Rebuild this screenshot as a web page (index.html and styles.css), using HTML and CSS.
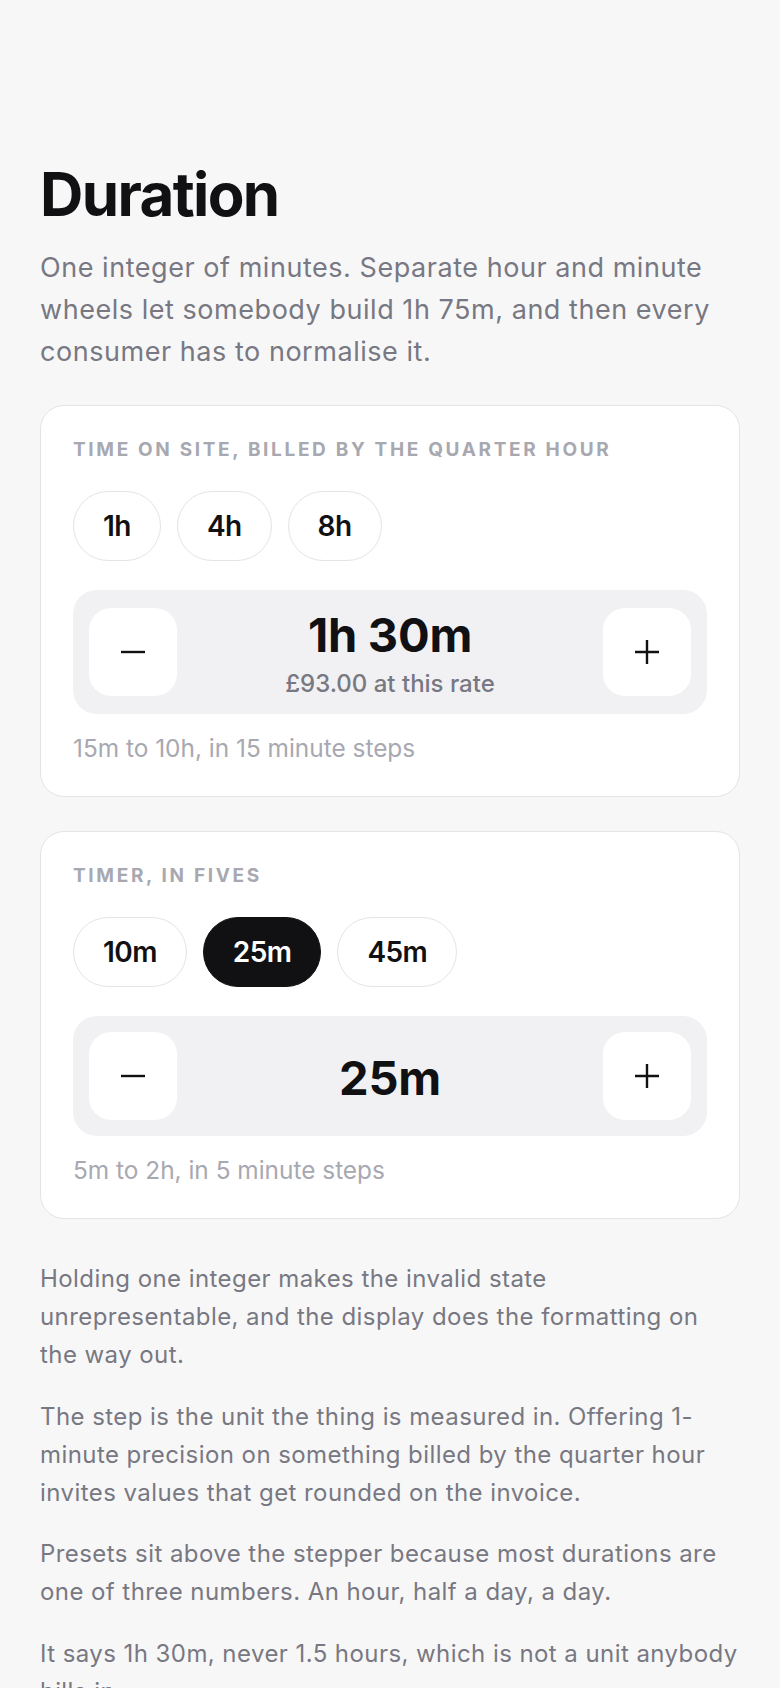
FILE: index.html
```html
<!DOCTYPE html>
<html lang="en">
<head>
    <meta charset="UTF-8">
    <meta name="viewport" content="width=device-width, initial-scale=1.0">
    <title>Duration</title>
    <link rel="stylesheet" href="styles.css">
</head>
<body>
    <main class="page">
        <h1 class="title">Duration</h1>
        <p class="intro">One integer of minutes. Separate hour and minute wheels let somebody build 1h 75m, and then every consumer has to normalise it.</p>

        <!-- billed time -->
        <section class="card" data-min="15" data-max="600" data-step="15" data-rate="62">
            <div class="card-label">Time on site, billed by the quarter hour</div>
            <div class="presets">
                <button class="chip" data-value="60">1h</button>
                <button class="chip" data-value="240">4h</button>
                <button class="chip" data-value="480">8h</button>
            </div>
            <div class="stepper">
                <button class="step-btn" data-dir="-1" aria-label="Less">
                    <svg width="26" height="26" viewBox="0 0 26 26"><path d="M1 13h24" /></svg>
                </button>
                <div class="readout">
                    <div class="value">1h 30m</div>
                    <div class="cost">£93.00 at this rate</div>
                </div>
                <button class="step-btn" data-dir="1" aria-label="More">
                    <svg width="26" height="26" viewBox="0 0 26 26"><path d="M1 13h24M13 1v24" /></svg>
                </button>
            </div>
            <div class="hint">15m to 10h, in 15 minute steps</div>
        </section>

        <!-- timer -->
        <section class="card" data-min="5" data-max="120" data-step="5">
            <div class="card-label">Timer, in fives</div>
            <div class="presets">
                <button class="chip" data-value="10">10m</button>
                <button class="chip active" data-value="25">25m</button>
                <button class="chip" data-value="45">45m</button>
            </div>
            <div class="stepper">
                <button class="step-btn" data-dir="-1" aria-label="Less">
                    <svg width="26" height="26" viewBox="0 0 26 26"><path d="M1 13h24" /></svg>
                </button>
                <div class="readout">
                    <div class="value">25m</div>
                </div>
                <button class="step-btn" data-dir="1" aria-label="More">
                    <svg width="26" height="26" viewBox="0 0 26 26"><path d="M1 13h24M13 1v24" /></svg>
                </button>
            </div>
            <div class="hint">5m to 2h, in 5 minute steps</div>
        </section>

        <div class="notes">
            <p>Holding one integer makes the invalid state unrepresentable, and the display does the formatting on the way out.</p>
            <p>The step is the unit the thing is measured in. Offering 1-minute precision on something billed by the quarter hour invites values that get rounded on the invoice.</p>
            <p>Presets sit above the stepper because most durations are one of three numbers. An hour, half a day, a day.</p>
            <p>It says 1h 30m, never 1.5 hours, which is not a unit anybody bills in.</p>
        </div>
    </main>

    <script>
        // 90 -> "1h 30m", 25 -> "25m", 60 -> "1h"
        function formatMinutes(total) {
            const h = Math.floor(total / 60);
            const m = total % 60;
            if (!h) return m + 'm';
            return m ? h + 'h ' + m + 'm' : h + 'h';
        }

        document.querySelectorAll('.card').forEach(card => {
            const min = +card.dataset.min;
            const max = +card.dataset.max;
            const step = +card.dataset.step;
            const rate = card.dataset.rate ? +card.dataset.rate : null;
            const valueEl = card.querySelector('.value');
            const costEl = card.querySelector('.cost');
            const chips = card.querySelectorAll('.chip');
            let minutes = card.querySelector('.chip.active') ? +card.querySelector('.chip.active').dataset.value : 90;

            function render() {
                valueEl.textContent = formatMinutes(minutes);
                if (costEl) costEl.textContent = '£' + (minutes / 60 * rate).toFixed(2) + ' at this rate';
                chips.forEach(c => c.classList.toggle('active', +c.dataset.value === minutes));
            }

            chips.forEach(c => c.addEventListener('click', () => {
                minutes = +c.dataset.value;
                render();
            }));

            card.querySelectorAll('.step-btn').forEach(b => b.addEventListener('click', () => {
                minutes = Math.min(max, Math.max(min, minutes + step * b.dataset.dir));
                render();
            }));

            render();
        });
    </script>
</body>
</html>
```

FILE: styles.css
```css
/* base */
:root {
    --ink: #111114;
    --muted: #787882;
    --faint: #a8a8b1;
    --line: #e4e4e7;
    --bg: #f7f7f8;
    --well: #f1f1f3;
}

* {
    margin: 0;
    padding: 0;
    box-sizing: border-box;
}

body {
    background: var(--bg);
    color: var(--ink);
    font-family: 'Inter', 'Noto Sans', sans-serif;
}

.page {
    padding: 161px 40px 40px;
}

/* heading */
.title {
    font-size: 60px;
    font-weight: 700;
    line-height: 66px;
    letter-spacing: -0.027em;
}

.intro {
    margin-top: 20px;
    font-size: 27px;
    line-height: 42px;
    letter-spacing: 0.02em;
    color: var(--muted);
}

/* cards */
.card {
    margin-top: 32px;
    background: white;
    border: 1px solid var(--line);
    border-radius: 24px;
    padding: 33px 32px 32px;
}

.card + .card {
    margin-top: 34px;
}

.card-label {
    font-size: 19px;
    line-height: 22px;
    font-weight: 700;
    letter-spacing: 0.14em;
    text-transform: uppercase;
    color: var(--faint);
}

.presets {
    display: flex;
    gap: 16px;
    margin-top: 30px;
}

.chip {
    height: 70px;
    padding: 0 29px;
    border: 1.5px solid var(--line);
    border-radius: 35px;
    background: white;
    color: var(--ink);
    font-family: inherit;
    font-size: 28px;
    font-weight: 600;
    letter-spacing: -0.02em;
    cursor: pointer;
}

.chip.active {
    background: var(--ink);
    border-color: var(--ink);
    color: white;
}

/* stepper */
.stepper {
    display: flex;
    align-items: center;
    margin-top: 29px;
    padding: 16px;
    background: var(--well);
    border-radius: 24px;
}

.step-btn {
    width: 88px;
    height: 88px;
    flex-shrink: 0;
    display: flex;
    align-items: center;
    justify-content: center;
    border: none;
    border-radius: 22px;
    background: white;
    cursor: pointer;
}

.step-btn svg path {
    fill: none;
    stroke: var(--ink);
    stroke-width: 2.4;
}

.readout {
    flex: 1;
    text-align: center;
    padding-top: 2px;
}

.readout .value {
    font-size: 47px;
    line-height: 53px;
    font-weight: 700;
    letter-spacing: -0.005em;
}

.readout .cost {
    margin-top: 9px;
    font-size: 24px;
    line-height: 28px;
    font-weight: 500;
    color: var(--muted);
}

.hint {
    margin-top: 19px;
    font-size: 24.4px;
    line-height: 31px;
    color: var(--faint);
}

/* notes under the cards */
.notes {
    margin-top: 41px;
}

.notes p {
    font-size: 24px;
    line-height: 1.58;
    letter-spacing: 0.018em;
    color: var(--muted);
}

.notes p + p {
    margin-top: 24px;
}
```
